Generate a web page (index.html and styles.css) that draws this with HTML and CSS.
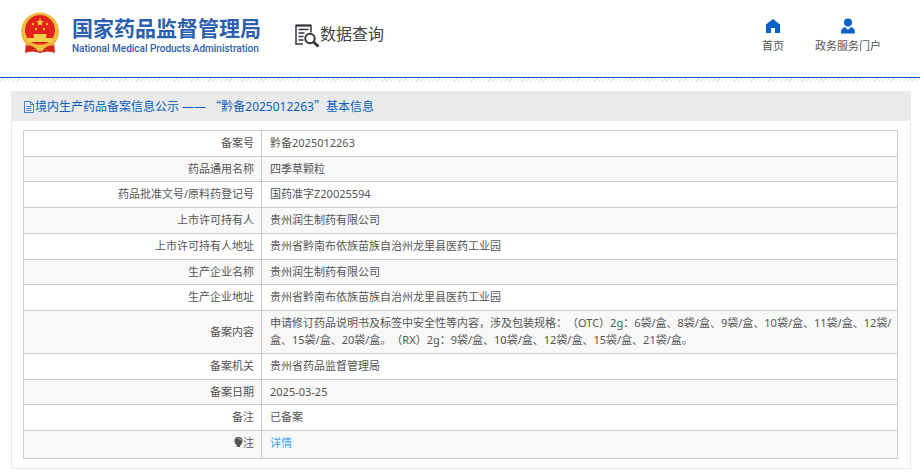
FILE: index.html
```html
<!DOCTYPE html>
<html lang="zh-CN">
<head>
<meta charset="utf-8">
<title>数据查询 - 国家药品监督管理局</title>
<link rel="stylesheet" href="styles.css">
</head>
<body>
<header class="top">
  <div class="brand">
    <svg class="emblem" viewBox="0 0 40 42" aria-hidden="true">
      <path d="M6 30 L5 41 Q12 38 20 41 Q28 38 35 41 L34 30Z" fill="#d5241c"/>
      <circle cx="20" cy="19.500" r="19" fill="#f3c444"/>
      <circle cx="20" cy="19.500" r="17.500" fill="none" stroke="#e0a52c" stroke-width="1" stroke-dasharray="2 1"/>
      <circle cx="20" cy="18" r="15" fill="#e4221b"/>
      <path d="M20 6l1 3h3l-2.400 2 .9 3-2.500-1.800-2.500 1.800.9-3-2.400-2h3z" fill="#f8d34a"/>
      <g fill="#f3b63c"><circle cx="13" cy="12" r="1.200"/><circle cx="27" cy="12" r="1.200"/><circle cx="16" cy="17" r="1.200"/><circle cx="24" cy="17" r="1.200"/></g>
      <path d="M14 22h12l1 2h-1v2h6v4H8v-4h6v-2h-1z" fill="#f8d34a"/>
      <path d="M6 29 Q20 37 34 29 L33 34 Q20 39 7 34Z" fill="#edb636"/>
      <path d="M8 33l6 2-1 4-7 1zM32 33l-6 2 1 4 7 1z" fill="#d5241c"/>
      <circle cx="20" cy="36" r="3.500" fill="#f3c444"/>
      <path d="M13 36l3 1-1 3M27 36l-3 1 1 3" stroke="#b91b17" fill="none"/>
    </svg>
    <div class="brand-text">
      <span class="brand-name">国家药品监督管理局</span>
      <span class="brand-en">National Medical Products Administration</span>
    </div>
  </div>
  <h1 class="section">
    <svg class="section-icon" viewBox="0 0 25 24" aria-hidden="true">
      <g fill="none" stroke="#35353f" stroke-width="1.500">
        <path d="M8 20H1V1.500h15v7"/>
        <path d="M1 1.500h15" stroke-width="2"/>
        <path d="M3.500 5.500h10M3.500 9h6M3.500 12.500h5M3.500 16h5" stroke-width="1.300"/>
        <circle cx="15" cy="14.500" r="4.700" stroke-width="2"/>
        <path d="M18.500 18l5 4.500" stroke-width="3"/>
      </g>
    </svg>
    <span>数据查询</span>
  </h1>
  <nav class="links">
    <a href="#">
      <svg viewBox="0 0 16 16" aria-hidden="true"><path d="M8 1L1 6.500V15h5v-5h4v5h5V6.500z" fill="#0660c6"/></svg>
      首页
    </a>
    <a href="#">
      <svg viewBox="0 0 16 16" aria-hidden="true"><circle cx="8" cy="4.500" r="4" fill="#0660c6"/><path d="M1 15.500c0-4 1-5.500 4-6.500L8 12l3-3c3 1 4 2.500 4 6.500z" fill="#0660c6"/></svg>
      政务服务门户
    </a>
  </nav>
</header>
<div class="hatch"></div>
<main class="panel">
  <h2 class="panel-title">
    <svg viewBox="0 0 11 12" aria-hidden="true"><path d="M1 .5h6l3 3v8H1zM7 .5v3h3M3 5.500h5M3 7.500h5M3 9.500h5" fill="none" stroke="#1a66c2" stroke-width=".8"/></svg>
    <span>境内生产药品备案信息公示 —— <span class="quote">“</span>黔备2025012263<span class="quote">”</span>基本信息</span>
  </h2>
  <div class="panel-body">
    <table class="info">
      <tbody>
        <tr><th scope="row">备案号</th><td>黔备2025012263</td></tr>
        <tr><th scope="row">药品通用名称</th><td>四季草颗粒</td></tr>
        <tr><th scope="row">药品批准文号/原料药登记号</th><td>国药准字Z20025594</td></tr>
        <tr><th scope="row">上市许可持有人</th><td>贵州润生制药有限公司</td></tr>
        <tr><th scope="row">上市许可持有人地址</th><td>贵州省黔南布依族苗族自治州龙里县医药工业园</td></tr>
        <tr><th scope="row">生产企业名称</th><td>贵州润生制药有限公司</td></tr>
        <tr><th scope="row">生产企业地址</th><td>贵州省黔南布依族苗族自治州龙里县医药工业园</td></tr>
        <tr><th scope="row">备案内容</th><td>申请修订药品说明书及标签中安全性等内容，涉及包装规格：（OTC）2g：6袋/盒、8袋/盒、9袋/盒、10袋/盒、11袋/盒、12袋/<wbr>盒、15袋/盒、20袋/盒。（RX）2g：9袋/盒、10袋/盒、12袋/盒、15袋/盒、21袋/盒。</td></tr>
        <tr><th scope="row">备案机关</th><td>贵州省药品监督管理局</td></tr>
        <tr><th scope="row">备案日期</th><td>2025-03-25</td></tr>
        <tr><th scope="row">备注</th><td>已备案</td></tr>
        <tr class="last"><th scope="row"><svg class="bulb" viewBox="0 0 9 10" aria-hidden="true"><circle cx="4.500" cy="4" r="4" fill="#555"/><path d="M2 6h5L6 10H3z" fill="#555"/><path d="M4.500 1.500q2 0 2.500 2" fill="none" stroke="#ddd" stroke-width=".8"/></svg>注</th><td><a href="#">详情</a></td></tr>
      </tbody>
    </table>
  </div>
</main>
</body>
</html>
```
FILE: styles.css
```css
* {
  box-sizing: border-box;
}

body {
  margin: 0;
  background: #fff;
  color: #555;
  font: 11px/17px "Noto Sans", "Noto Sans CJK SC", sans-serif;
  text-spacing-trim: space-all;
}

a {
  color: #409eff;
  text-decoration: none;
}

.top {
  display: flex;
  align-items: flex-start;
  height: 78px;
  padding: 12px 39px 0 20px;
  border-bottom: 1px solid #0b5fc0;
}

.brand {
  display: flex;
  gap: 12px;
}

.emblem {
  width: 40px;
  height: 42px;
}

.brand-text {
  display: flex;
  flex-direction: column;
  width: 192px;
  padding-top: 3px;
  color: #2c5fb0;
  white-space: nowrap;
}

.brand-name {
  font: bold 21px/25px "Noto Sans CJK SC", sans-serif;
}

.brand-en {
  font: 500 10px/17px Roboto, sans-serif;
}

.section {
  display: flex;
  margin: 12px 0 0 31px;
  color: #444;
  font: 16px/18px "Noto Sans CJK SC", sans-serif;
}

.section-icon {
  width: 25px;
  height: 24px;
}

.links {
  display: flex;
  gap: 31px;
  margin: 6px 0 0 auto;
}

.links a {
  display: flex;
  flex-direction: column;
  align-items: center;
  gap: 3px;
  color: #555;
}

.links svg {
  width: 16px;
  height: 16px;
}

.hatch {
  height: 4px;
  background: repeating-linear-gradient(135deg, #fff 0 2px, #e4e4e4 2px 3px);
}

.panel {
  margin: 9px 9px 5px 11px;
  border: 1px solid #e8e8ee;
}

.panel-title {
  display: flex;
  align-items: center;
  margin: 0;
  padding: 6px 11px;
  background: #eaeaea;
  color: #0a5fc0;
  font: 12px/17px "Noto Sans", "Noto Sans CJK SC", sans-serif;
}

.panel-title svg {
  width: 12px;
  height: 12px;
}

.quote {
  font-family: "Noto Sans CJK SC", sans-serif;
  line-height: 1;
}

.panel-body {
  padding: 9px 12px 9px 11px;
}

.info {
  width: 100%;
  border-collapse: collapse;
  table-layout: fixed;
}

.info th,
.info td {
  padding: 3px 8px 5px;
  border: 1px solid #ccc;
  font-weight: normal;
  text-align: left;
}

.info th {
  width: 238px;
  padding-right: 7px;
  text-align: right;
}

.info td {
  padding-right: 0;
}

.info tr:nth-child(4n + 2) th,
.info tr:nth-child(4n + 2) td {
  padding-bottom: 4px;
}

.info tr:nth-child(even) {
  background: #f8f8f8;
}

.info .last th,
.info .last td {
  padding-bottom: 7px;
}

.bulb {
  width: 9px;
  height: 10px;
}
```
